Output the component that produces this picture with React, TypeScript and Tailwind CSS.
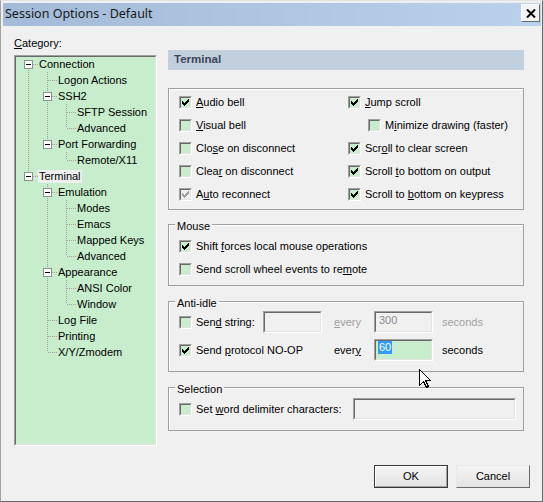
import React from "react";

const CHECK = [
  "......#",
  ".....##",
  "#...###",
  "##.###.",
  "#####..",
  ".###...",
  "..#....",
];

function CheckGlyph({ color }: { color: string }) {
  const rects: React.ReactNode[] = [];
  CHECK.forEach((row, y) =>
    row.split("").forEach((c, x) => {
      if (c === "#") rects.push(<rect key={`${x}-${y}`} x={x} y={y} width={1} height={1} fill={color} />);
    })
  );
  return (
    <svg width="7" height="7" viewBox="0 0 7 7" shapeRendering="crispEdges">
      {rects}
    </svg>
  );
}

function Cb({ checked, disabled }: { checked?: boolean; disabled?: boolean }) {
  return (
    <span className="flex w-[13px] h-[13px] shrink-0 border border-t-[#a0a0a0] border-l-[#a0a0a0] border-r-white border-b-white">
      <span
        className={
          "flex w-full h-full items-center justify-center border border-t-[#696969] border-l-[#696969] border-r-[#e3e3e3] border-b-[#e3e3e3] " +
          (disabled ? "bg-[#f0f0f0]" : "bg-[#c7edcc]")
        }
      >
        {checked && <CheckGlyph color={disabled ? "#a0a0a0" : "#000000"} />}
      </span>
    </span>
  );
}

function TextBox({ w, bg, children }: { w: string; bg: string; children?: React.ReactNode }) {
  return (
    <div className={`${w} h-[22px] shrink-0 border border-t-[#a0a0a0] border-l-[#a0a0a0] border-r-white border-b-white`}>
      <div
        className={`w-full h-full border border-t-[#696969] border-l-[#696969] border-r-[#e3e3e3] border-b-[#e3e3e3] ${bg} pl-[1px] leading-[13px]`}
      >
        {children}
      </div>
    </div>
  );
}

function CheckRow({
  checked,
  disabled,
  children,
  className = "",
}: {
  checked?: boolean;
  disabled?: boolean;
  children: React.ReactNode;
  className?: string;
}) {
  return (
    <div className={`flex items-center gap-[4px] h-[23px] ${className}`}>
      <Cb checked={checked} disabled={disabled} />
      <span className="whitespace-nowrap">{children}</span>
    </div>
  );
}

type TreeRow = {
  t: string;
  anc: boolean[];
  exp?: boolean;
  pos: "first" | "mid" | "last";
  sel?: boolean;
};

const TREE: TreeRow[] = [
  { t: "Connection", anc: [], exp: true, pos: "first" },
  { t: "Logon Actions", anc: [true], pos: "mid" },
  { t: "SSH2", anc: [true], exp: true, pos: "mid" },
  { t: "SFTP Session", anc: [true, true], pos: "mid" },
  { t: "Advanced", anc: [true, true], pos: "last" },
  { t: "Port Forwarding", anc: [true], exp: true, pos: "last" },
  { t: "Remote/X11", anc: [true, false], pos: "last" },
  { t: "Terminal", anc: [], exp: true, pos: "last", sel: true },
  { t: "Emulation", anc: [false], exp: true, pos: "mid" },
  { t: "Modes", anc: [false, true], pos: "mid" },
  { t: "Emacs", anc: [false, true], pos: "mid" },
  { t: "Mapped Keys", anc: [false, true], pos: "mid" },
  { t: "Advanced", anc: [false, true], pos: "last" },
  { t: "Appearance", anc: [false], exp: true, pos: "mid" },
  { t: "ANSI Color", anc: [false, true], pos: "mid" },
  { t: "Window", anc: [false, true], pos: "last" },
  { t: "Log File", anc: [false], pos: "mid" },
  { t: "Printing", anc: [false], pos: "mid" },
  { t: "X/Y/Zmodem", anc: [false], pos: "last" },
];

const DOT = "#a0a0a0";

function AncCol({ line }: { line: boolean }) {
  return (
    <svg width="19" height="16" className="shrink-0" shapeRendering="crispEdges">
      {line && <line x1="9.5" y1="0" x2="9.5" y2="16" stroke={DOT} strokeDasharray="1 1" />}
    </svg>
  );
}

function OwnCol({ exp, pos }: { exp?: boolean; pos: TreeRow["pos"] }) {
  const y1 = pos === "first" ? 8 : 0;
  const y2 = pos === "last" ? 8 : 16;
  return (
    <svg width="19" height="16" className="shrink-0" shapeRendering="crispEdges">
      <line x1="9.5" y1={y1} x2="9.5" y2={y2} stroke={DOT} strokeDasharray="1 1" />
      <line x1="10" y1="8.5" x2="19" y2="8.5" stroke={DOT} strokeDasharray="1 1" />
      {exp && (
        <>
          <rect x="5.5" y="4.5" width="8" height="8" fill="#ffffff" stroke="#919191" />
          <line x1="7" y1="8.5" x2="12" y2="8.5" stroke="#000000" />
        </>
      )}
    </svg>
  );
}

function Tree() {
  return (
    <div className="w-[143px] h-[391px] border border-t-[#a0a0a0] border-l-[#a0a0a0] border-r-white border-b-white">
      <div className="w-full h-full border border-t-[#696969] border-l-[#696969] border-r-[#e3e3e3] border-b-[#e3e3e3] bg-[#c7edcc] pl-[3px]">
        <div className="-mt-[1px]">
          {TREE.map((r, i) => (
            <div key={i} className="flex items-center h-[16px]">
              {r.anc.map((a, j) => (
                <AncCol key={j} line={a} />
              ))}
              <OwnCol exp={r.exp} pos={r.pos} />
              <span
                className={
                  "px-[1px] leading-[13px] h-[13px] whitespace-nowrap text-black " + (r.sel ? "bg-[#efefef]" : "")
                }
              >
                {r.t}
              </span>
            </div>
          ))}
        </div>
      </div>
    </div>
  );
}

function Group({
  label,
  className = "",
  children,
}: {
  label: string;
  className?: string;
  children: React.ReactNode;
}) {
  return (
    <div className={`border border-[#a0a0a0] shadow-[inset_1px_1px_0_#ffffff] ${className}`}>
      <div className="-mt-[6px] ml-[6px] w-fit px-[2px] bg-[#f0f0f0] leading-[14px] h-[14px]">{label}</div>
      {children}
    </div>
  );
}

function Cursor() {
  return (
    <svg
      width="13"
      height="20"
      viewBox="0 0 13 20"
      className="absolute left-[418px] top-[368px]"
      shapeRendering="crispEdges"
    >
      <path
        d="M0.5 0.5 L0.5 16.5 L4.5 12.5 L7.5 18.5 L9.5 17.5 L6.5 11.5 L11.5 11.5 Z"
        fill="#ffffff"
        stroke="#000000"
        strokeWidth="1"
        strokeLinejoin="miter"
      />
    </svg>
  );
}

export default function App() {
  return (
    <div className="relative w-[543px] h-[502px] overflow-hidden bg-[#f0f0f0] border border-t-[#e3e3e3] border-l-[#a0a0a0] border-r-[#696969] border-b-[#696969] text-[11px] text-black font-['Liberation_Sans',Arial,sans-serif]">
      <div className="pl-[2px] pr-[1px] pt-[2px]">
        {/* Title bar */}
        <div className="h-[23px] flex items-start justify-between bg-gradient-to-r from-[#a3bbd8] to-[#b9d1ea]">
          <span className="pl-[2px] pt-[3px] leading-[16px] text-[12.5px] text-[#1a1a1a] font-['Noto_Sans',sans-serif]">
            Session Options - Default
          </span>
          <div className="mt-[1px] mr-[1px] w-[19px] h-[18px] flex items-center justify-center bg-[#f2f2f2] border border-t-white border-l-white border-r-[#6a6a6a] border-b-[#6a6a6a]">
            <svg width="10" height="9" viewBox="0 0 10 9">
              <path d="M1 0.5 L9 8.5 M9 0.5 L1 8.5" stroke="#000000" strokeWidth="2" />
            </svg>
          </div>
        </div>

        {/* Body */}
        <div className="flex pl-[11px] pt-[10px]">
          <div className="flex flex-col">
            <div className="leading-[14px] h-[14px]">
              <u>C</u>ategory:
            </div>
            <div className="mt-[5px]">
              <Tree />
            </div>
          </div>

          <div className="ml-[11px] mt-[14px] w-[356px] flex flex-col">
            <div className="h-[20px] bg-[#c2d0de] pl-[6px] flex items-center font-bold text-[#3b4656] text-[11.5px]">
              Terminal
            </div>

            {/* Terminal group */}
            <div className="mt-[18px] h-[122px] border border-[#a0a0a0] shadow-[inset_1px_1px_0_#ffffff] pl-[10px] pt-[2px]">
              <div className="flex">
                <div className="w-[169px]">
                  <CheckRow checked>
                    <u>A</u>udio bell
                  </CheckRow>
                </div>
                <CheckRow checked>
                  <u>J</u>ump scroll
                </CheckRow>
              </div>
              <div className="flex">
                <div className="w-[169px]">
                  <CheckRow>
                    <u>V</u>isual bell
                  </CheckRow>
                </div>
                <CheckRow className="ml-[20px]">
                  M<u>i</u>nimize drawing (faster)
                </CheckRow>
              </div>
              <div className="flex">
                <div className="w-[169px]">
                  <CheckRow>
                    Clo<u>s</u>e on disconnect
                  </CheckRow>
                </div>
                <CheckRow checked>
                  Scr<u>o</u>ll to clear screen
                </CheckRow>
              </div>
              <div className="flex">
                <div className="w-[169px]">
                  <CheckRow>
                    Clea<u>r</u> on disconnect
                  </CheckRow>
                </div>
                <CheckRow checked>
                  Scroll <u>t</u>o bottom on output
                </CheckRow>
              </div>
              <div className="flex">
                <div className="w-[169px]">
                  <CheckRow checked disabled>
                    A<u>u</u>to reconnect
                  </CheckRow>
                </div>
                <CheckRow checked>
                  Scroll to <u>b</u>ottom on keypress
                </CheckRow>
              </div>
            </div>

            {/* Mouse */}
            <Group label="Mouse" className="mt-[14px] h-[62px]">
              <div className="pl-[10px] mt-[2px]">
                <CheckRow checked>
                  Shift <u>f</u>orces local mouse operations
                </CheckRow>
                <CheckRow>
                  Send scroll wheel events to re<u>m</u>ote
                </CheckRow>
              </div>
            </Group>

            {/* Anti-idle */}
            <Group label="Anti-idle" className="mt-[15px] h-[71px]">
              <div className="pl-[10px] mt-[1px]">
                <div className="flex items-center h-[22px]">
                  <Cb />
                  <span className="ml-[4px] w-[67px] whitespace-nowrap">
                    Sen<u>d</u> string:
                  </span>
                  <TextBox w="w-[59px]" bg="bg-[#f0f0f0]" />
                  <span className="ml-[12px] w-[40px] text-[#a0a0a0]">
                    <u>e</u>very
                  </span>
                  <TextBox w="w-[59px]" bg="bg-[#f0f0f0]">
                    <span className="inline-block pl-[2px] pt-[1px] text-[#8c8c8c]">300</span>
                  </TextBox>
                  <span className="ml-[9px] text-[#a0a0a0]">seconds</span>
                </div>
                <div className="flex items-center h-[22px] mt-[6px]">
                  <Cb checked />
                  <span className="ml-[4px] w-[138px] whitespace-nowrap">
                    Send <u>p</u>rotocol NO-OP
                  </span>
                  <span className="w-[40px]">
                    ever<u>y</u>
                  </span>
                  <TextBox w="w-[59px]" bg="bg-[#c7edcc]">
                    <span className="inline-block ml-[1px] px-[1px] bg-[#3399ff] text-white leading-[13px]">60</span>
                  </TextBox>
                  <span className="ml-[9px]">seconds</span>
                </div>
              </div>
            </Group>

            {/* Selection */}
            <Group label="Selection" className="mt-[15px] h-[44px]">
              <div className="pl-[10px] mt-[2px]">
                <div className="flex items-center h-[22px]">
                  <Cb />
                  <span className="ml-[4px] w-[157px] whitespace-nowrap">
                    Set <u>w</u>ord delimiter characters:
                  </span>
                  <TextBox w="w-[163px]" bg="bg-[#f0f0f0]" />
                </div>
              </div>
            </Group>
          </div>
        </div>

        {/* Buttons */}
        <div className="flex justify-end gap-[8px] pr-[11px] mt-[19px]">
          <div className="w-[74px] h-[23px] border border-[#3a3a3a]">
            <div className="w-full h-full flex items-center justify-center bg-gradient-to-b from-[#f4f4f4] to-[#e4e4e4] border border-t-white border-l-white border-r-[#a0a0a0] border-b-[#a0a0a0]">
              OK
            </div>
          </div>
          <div className="w-[74px] h-[23px] flex items-center justify-center bg-gradient-to-b from-[#f4f4f4] to-[#e4e4e4] border border-t-[#e8e8e8] border-l-[#e8e8e8] border-r-[#6a6a6a] border-b-[#6a6a6a]">
            Cancel
          </div>
        </div>
      </div>
      <Cursor />
    </div>
  );
}
